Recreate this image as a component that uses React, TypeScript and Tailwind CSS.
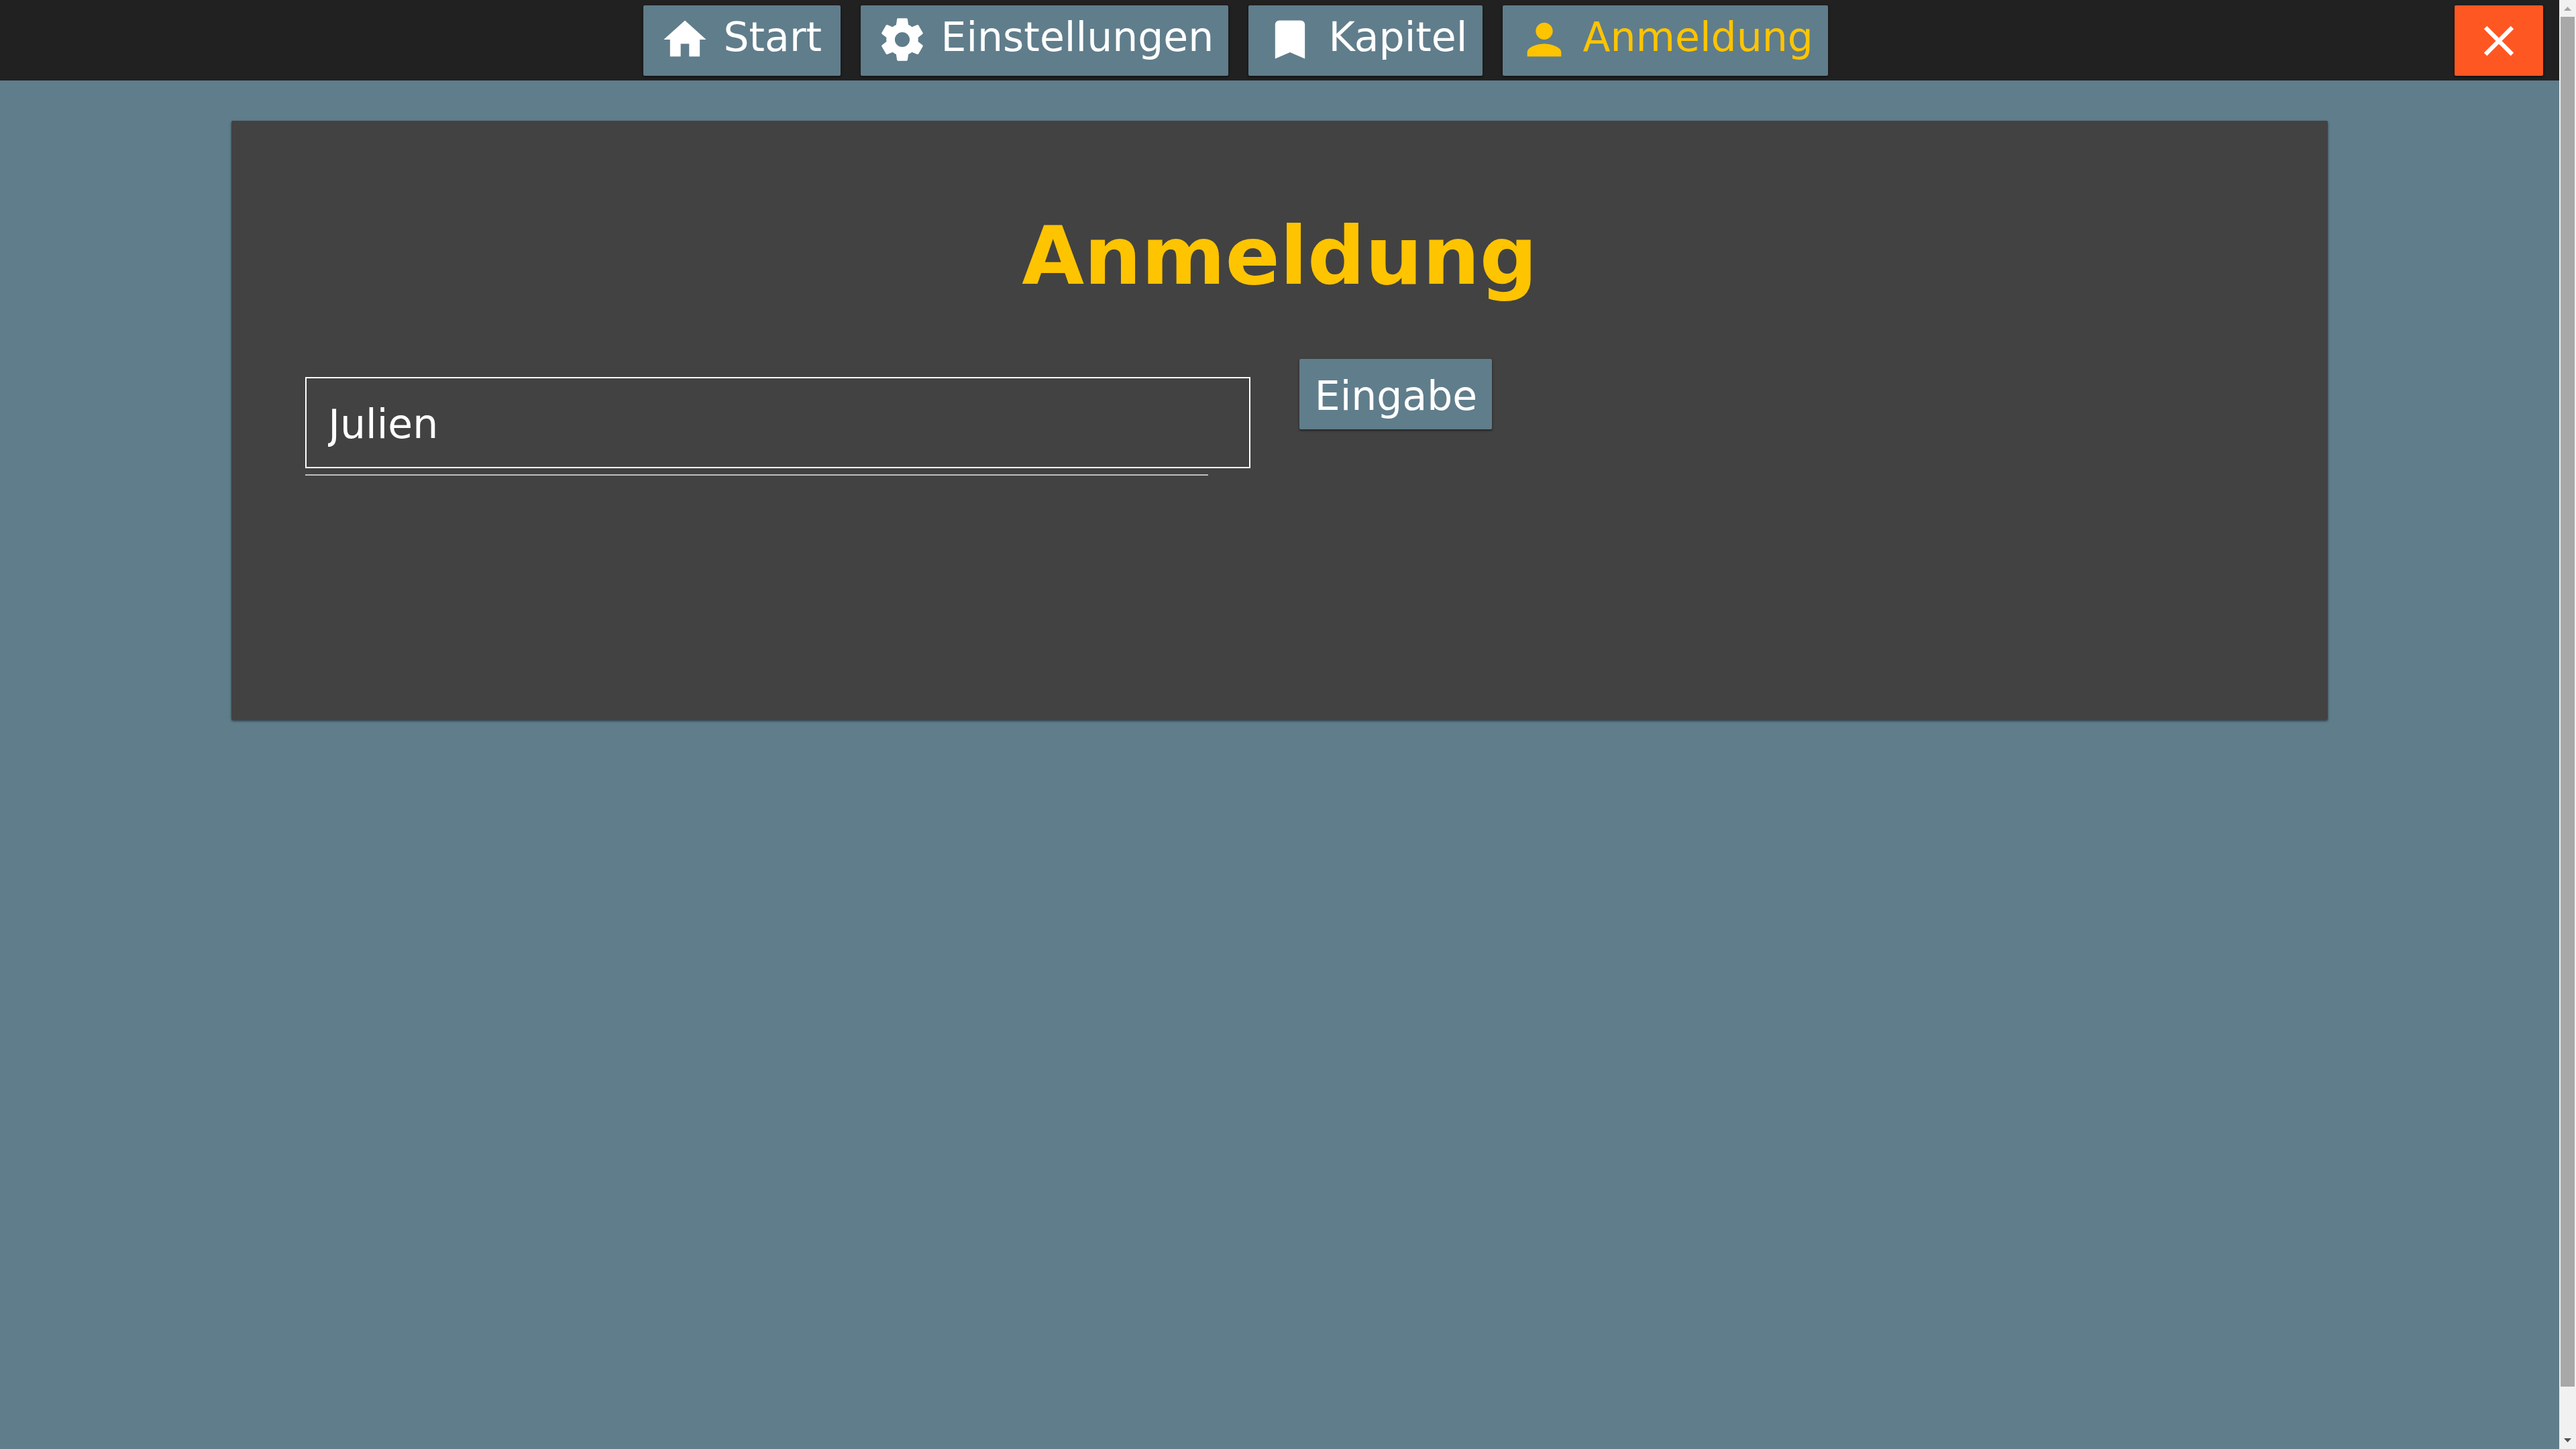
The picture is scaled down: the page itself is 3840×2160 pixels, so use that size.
import React, { useState } from "react";

const RAISED =
  "rounded-[2px] shadow-[0_2px_3px_0_rgba(0,0,0,0.4),0_1px_5px_0_rgba(0,0,0,0.14)]";

const ICONS = {
  home: "M10 20v-6h4v6h5v-8h3L12 3 2 12h3v8z",
  settings:
    "M19.43 12.98c.04-.32.07-.64.07-.98s-.03-.66-.07-.98l2.11-1.65c.19-.15.24-.42.12-.64l-2-3.46c-.12-.22-.39-.3-.61-.22l-2.49 1c-.52-.4-1.08-.73-1.69-.98l-.38-2.65C14.46 2.18 14.25 2 14 2h-4c-.25 0-.46.18-.49.42l-.38 2.65c-.61.25-1.17.59-1.69.98l-2.49-1c-.23-.09-.49 0-.61.22l-2 3.46c-.13.22-.07.49.12.64l2.11 1.65c-.04.32-.07.65-.07.98s.03.66.07.98l-2.11 1.65c-.19.15-.24.42-.12.64l2 3.46c.12.22.39.3.61.22l2.49-1c.52.4 1.08.73 1.69.98l.38 2.65c.03.24.24.42.49.42h4c.25 0 .46-.18.49-.42l.38-2.65c.61-.25 1.17-.59 1.69-.98l2.49 1c.23.09.49 0 .61-.22l2-3.46c.12-.22.07-.49-.12-.64l-2.11-1.65zM12 15.5c-1.93 0-3.5-1.57-3.5-3.5s1.57-3.5 3.5-3.5 3.5 1.57 3.5 3.5-1.57 3.5-3.5 3.5z",
  bookmark: "M17 3H7c-1.1 0-2 .9-2 2v16l7-3 7 3V5c0-1.1-.9-2-2-2z",
  person:
    "M12 12c2.21 0 4-1.79 4-4s-1.79-4-4-4-4 1.79-4 4 1.79 4 4 4zm0 2c-2.67 0-8 1.34-8 4v2h16v-2c0-2.66-5.33-4-8-4z",
  close:
    "M19 6.41L17.59 5 12 10.59 6.41 5 5 6.41 10.59 12 5 17.59 6.41 19 12 13.41 17.59 19 19 17.59 13.41 12z",
};

function Icon({ path, className }: { path: string; className: string }) {
  return (
    <svg viewBox="0 0 24 24" fill="currentColor" aria-hidden="true" className={className}>
      <path d={path} />
    </svg>
  );
}

const NAV = [
  { label: "Start", icon: ICONS.home, active: false, width: "w-[294px]" },
  { label: "Einstellungen", icon: ICONS.settings, active: false, width: "w-[548px]" },
  { label: "Kapitel", icon: ICONS.bookmark, active: false, width: "w-[349px]" },
  { label: "Anmeldung", icon: ICONS.person, active: true, width: "w-[485px]" },
];

function TopBar() {
  return (
    <header className="flex h-[120px] items-start bg-[#212121] pt-2 pr-6">
      <nav className="flex flex-1 justify-center gap-[30px] pl-6">
        {NAV.map((item) => (
          <button
            key={item.label}
            type="button"
            className={`h-[105px] bg-[#607d8b] pb-1 pl-6 text-left whitespace-nowrap ${RAISED} ${item.width} ${
              item.active ? "text-[#ffc400]" : "text-white"
            }`}
          >
            <Icon path={item.icon} className="mr-5 inline-block size-[76px] align-middle" />
            {item.label}
          </button>
        ))}
      </nav>
      <button
        type="button"
        aria-label="Schließen"
        className={`flex h-[105px] w-[132px] items-center justify-center bg-[#ff5722] text-white ${RAISED}`}
      >
        <Icon path={ICONS.close} className="size-[76px]" />
      </button>
    </header>
  );
}

function LoginCard() {
  const [name, setName] = useState("Julien");
  return (
    <main
      className={`mx-auto mt-[60px] min-h-[893px] w-[81.9%] bg-[#424242] px-[110px] pt-[132px] ${RAISED}`}
    >
      <h1 className="text-center text-[120px] leading-[140px] font-bold text-[#ffc400]">
        Anmeldung
      </h1>
      <form className="mt-[83px] grid grid-cols-2" onSubmit={(e) => e.preventDefault()}>
        <div className="pt-[27px]">
          <input
            type="text"
            aria-label="Name"
            value={name}
            onChange={(e) => setName(e.target.value)}
            className="block h-[136px] w-[calc(100%-43px)] border-2 border-white bg-transparent px-8 pt-1 text-white outline-none"
          />
          <div className="mt-[9px] mr-[106px] h-[2px] bg-[#c0c0c0]" />
        </div>
        <div className="pl-[30px]">
          <button
            type="submit"
            className={`h-[105px] w-[287px] bg-[#607d8b] pt-1 text-center text-white ${RAISED}`}
          >
            Eingabe
          </button>
        </div>
      </form>
    </main>
  );
}

function ScrollBar() {
  return (
    <div
      aria-hidden="true"
      className="sticky top-0 flex h-screen w-[25px] shrink-0 flex-col items-center bg-[#f1f1f1]"
    >
      <div className="flex h-[25px] shrink-0 items-center justify-center">
        <svg viewBox="0 0 11 6" className="h-[6px] w-[11px]" fill="#a3a3a3">
          <path d="M5.5 0 11 6H0z" />
        </svg>
      </div>
      <div className="w-[21px] flex-1 bg-[#a8a8a8]" />
      <div className="flex h-[93px] shrink-0 items-end justify-center pb-[10px]">
        <svg viewBox="0 0 11 6" className="h-[6px] w-[11px]" fill="#505050">
          <path d="M0 0h11L5.500 6z" />
        </svg>
      </div>
    </div>
  );
}

export default function App() {
  return (
    <div className="flex min-h-screen bg-[#607d8b] font-['DejaVu_Sans',sans-serif] text-[60px] leading-[70px]">
      <div className="min-w-0 flex-1">
        <TopBar />
        <LoginCard />
      </div>
      <ScrollBar />
    </div>
  );
}
